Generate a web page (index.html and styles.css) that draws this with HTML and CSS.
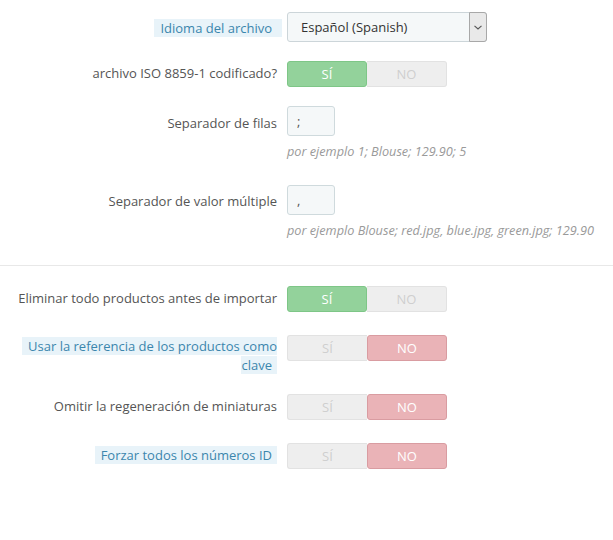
FILE: index.html
```html
<!DOCTYPE html>
<html lang="es">
<head>
<meta charset="utf-8">
<title>Importar</title>
<link rel="stylesheet" href="styles.css">
</head>
<body>
<div class="form">
  <div class="section section-top">
    <div class="fg fg-input">
      <div class="lbl"><span class="tip tip-wide">Idioma del archivo</span></div>
      <div class="ctl">
        <div class="select">
          <span class="select-text">Español (Spanish)</span>
          <span class="select-arrow"><svg width="8" height="5" viewBox="0 0 8 5"><path d="M0.5 0.8 L4 4 L7.5 0.8" fill="none" stroke="#555" stroke-width="1.1"/></svg></span>
        </div>
      </div>
    </div>
    <div class="fg fg-switch">
      <div class="lbl lbl-plain">archivo ISO 8859-1 codificado?</div>
      <div class="ctl">
        <div class="switch"><span class="opt yes on">SÍ</span><span class="opt no">NO</span></div>
      </div>
    </div>
    <div class="fg fg-input fg-help">
      <div class="lbl lbl-plain">Separador de filas</div>
      <div class="ctl">
        <div class="input">;</div>
        <p class="help">por ejemplo 1; Blouse; 129.90; 5</p>
      </div>
    </div>
    <div class="fg fg-input fg-last">
      <div class="lbl lbl-plain">Separador de valor múltiple</div>
      <div class="ctl">
        <div class="input">,</div>
        <p class="help">por ejemplo Blouse; red.jpg, blue.jpg, green.jpg; 129.90</p>
      </div>
    </div>
  </div>
  <hr class="sep">
  <div class="section section-bottom">
    <div class="fg fg-switch">
      <div class="lbl lbl-plain">Eliminar todo productos antes de importar</div>
      <div class="ctl">
        <div class="switch"><span class="opt yes on">SÍ</span><span class="opt no">NO</span></div>
      </div>
    </div>
    <div class="fg fg-switch fg-multi">
      <div class="lbl"><span class="tip">Usar la referencia de los productos como clave</span></div>
      <div class="ctl">
        <div class="switch"><span class="opt yes">SÍ</span><span class="opt no on">NO</span></div>
      </div>
    </div>
    <div class="fg fg-switch">
      <div class="lbl lbl-plain">Omitir la regeneración de miniaturas</div>
      <div class="ctl">
        <div class="switch"><span class="opt yes">SÍ</span><span class="opt no on">NO</span></div>
      </div>
    </div>
    <div class="fg fg-switch">
      <div class="lbl"><span class="tip">Forzar todos los números ID</span></div>
      <div class="ctl">
        <div class="switch"><span class="opt yes">SÍ</span><span class="opt no on">NO</span></div>
      </div>
    </div>
  </div>
</div>
</body>
</html>
```
FILE: styles.css
```css
* { box-sizing: border-box; }
html, body { margin: 0; padding: 0; background: #fff; }
body {
  font-family: "Open Sans", "Liberation Sans", sans-serif;
  font-size: 13px;
  color: #555;
}
.form { padding-top: 12px; }
.fg {
  display: grid;
  grid-template-columns: 287px 200px;
  align-items: start;
}
.section-top .fg { margin-bottom: 19px; }
.section-top .fg-help { margin-bottom: 25px; }
.section-top .fg-last { margin-bottom: 0; }
.section-bottom .fg { margin-bottom: 23px; }
.section-bottom .fg-multi { margin-bottom: 19px; }
.lbl {
  text-align: right;
  padding-right: 10px;
  line-height: 19px;
}
.fg-input .lbl { padding-top: 7px; }
.fg-help .lbl { padding-top: 8px; }
.fg-switch .lbl { padding-top: 3px; }
.fg-multi .lbl { padding-top: 2px; }
.tip {
  background: #e8f3f9;
  color: #3b86ad;
  padding: 0 5px 0 6px;
}
.tip-wide { padding-right: 10px; margin-right: -5px; }
.select {
  width: 200px;
  height: 30px;
  display: flex;
  align-items: stretch;
  background: #f5f8f9;
  border: 1px solid #ccd5d9;
  border-radius: 3px;
  color: #333;
}
.select-text {
  flex: 1;
  padding-left: 13px;
  line-height: 28px;
}
.select-arrow {
  width: 18px;
  margin: -1px -1px -1px 0;
  background: #e9e9e9;
  border: 1px solid #a8a8a8;
  border-radius: 0 3px 3px 0;
  display: flex;
  align-items: center;
  justify-content: center;
}
.input {
  width: 48px;
  height: 30px;
  background: #f5f8f9;
  border: 1px solid #cfdadd;
  border-radius: 3px;
  padding-left: 9px;
  line-height: 28px;
  color: #555;
}
.help {
  margin: 6px 0 0;
  font-size: 12.7px;
  font-style: italic;
  color: #9a9a9a;
  line-height: 18px;
  white-space: nowrap;
}
.sep {
  border: 0;
  border-top: 1px solid #e8e8e8;
  margin: 26px 0 20px;
}
.switch {
  display: flex;
  width: 160px;
  height: 26px;
}
.opt {
  width: 80px;
  height: 26px;
  line-height: 24px;
  text-align: center;
  background: #eeeeee;
  border: 1px solid #e2e2e2;
  color: #cfcfcf;
}
.opt.yes { border-radius: 3px 0 0 3px; border-right: 0; }
.opt.no { border-radius: 0 3px 3px 0; border-left: 0; }
.opt.on { color: #fff; border-radius: 3px; }
.opt.yes.on { background: #93d29b; border: 1px solid #7ec687; }
.opt.no.on { background: #eab3b7; border: 1px solid #d99ca1; }
```
